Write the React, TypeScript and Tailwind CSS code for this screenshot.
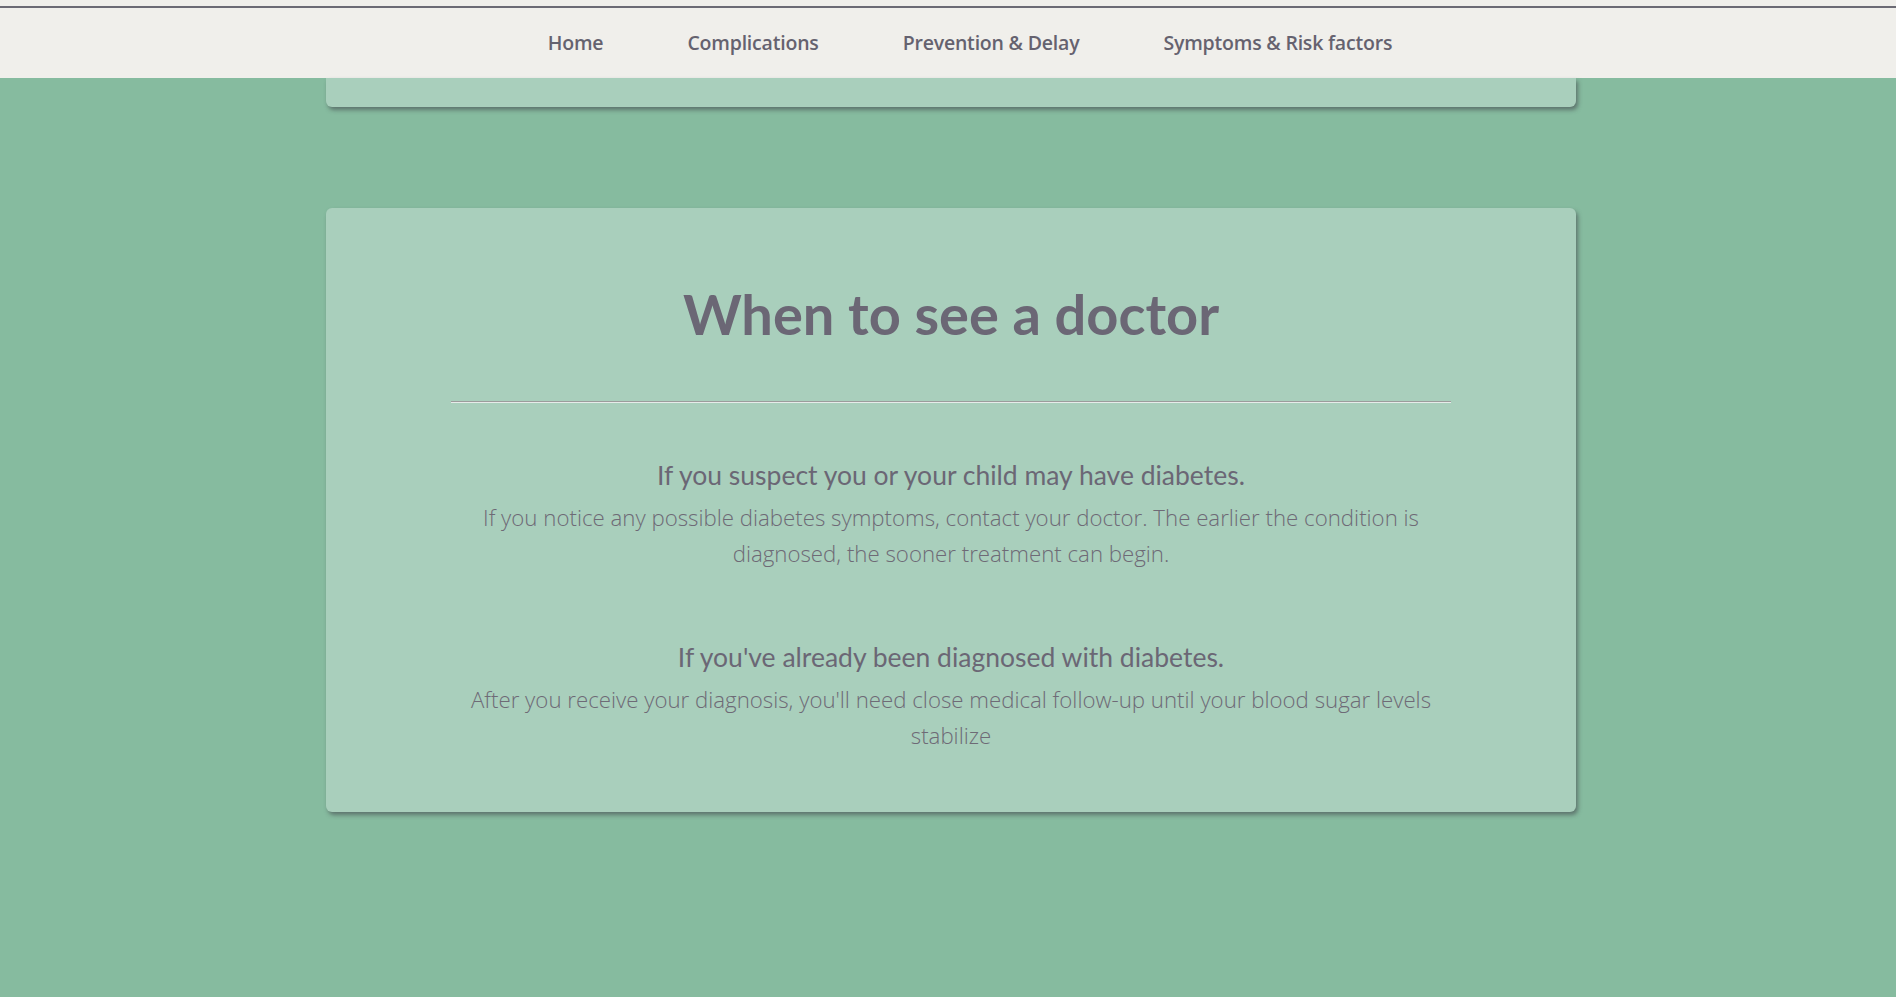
const navLinks = ['Home', 'Complications', 'Prevention & Delay', 'Symptoms & Risk factors'];

const sections = [
  {
    title: 'If you suspect you or your child may have diabetes.',
    body: 'If you notice any possible diabetes symptoms, contact your doctor. The earlier the condition is diagnosed, the sooner treatment can begin.',
  },
  {
    title: "If you've already been diagnosed with diabetes.",
    body: "After you receive your diagnosis, you'll need close medical follow-up until your blood sugar levels stabilize",
  },
];

function NavBar() {
  return (
    <header className="bg-[#f0efeb] pt-[6px]">
      <div className="h-[2px] bg-[#6b6a74]" />
      <nav className="flex h-[70px] items-center justify-center gap-[84px] pl-[44px] font-['Open_Sans',sans-serif] text-[19.5px] font-semibold text-[#65626f]">
        {navLinks.map((link) => (
          <a key={link} href="#" className="tracking-[-0.2px]">
            {link}
          </a>
        ))}
      </nav>
    </header>
  );
}

export default function App() {
  return (
    <div className="flex min-h-[997px] flex-col bg-[#86bb9f]">
      <NavBar />

      <main className="flex flex-col items-center pl-[6px]">
        {/* previous card, scrolled mostly under the nav */}
        <div className="h-[29px] w-[1250px] rounded-b-[6px] bg-[#a9cfbc] shadow-[2px_3px_4px_rgba(60,60,70,0.55)]" />

        <section className="mt-[101px] w-[1250px] rounded-[6px] bg-[#a9cfbc] px-[125px] pt-[66px] pb-[58px] text-center text-[#6b6775] shadow-[2px_3px_4px_rgba(60,60,70,0.55)]">
          <h1 className="font-['Lato',sans-serif] text-[56px] leading-[80px] font-bold">
            When to see a doctor
          </h1>
          <hr className="mt-[47px] border-t border-b border-t-[#9c9c9c] border-b-[#e6ece9]" />

          <div className="mt-[54px] flex flex-col gap-[67px]">
            {sections.map((s) => (
              <div key={s.title}>
                <h3 className="font-['Lato',sans-serif] text-[26.5px] leading-[36px] text-[#6b6775]">
                  {s.title}
                </h3>
                <p className="mt-[7px] font-['Open_Sans',sans-serif] text-[22.25px] leading-[36px] font-light text-[#6e6a76]">
                  {s.body}
                </p>
              </div>
            ))}
          </div>
        </section>
      </main>
    </div>
  );
}
